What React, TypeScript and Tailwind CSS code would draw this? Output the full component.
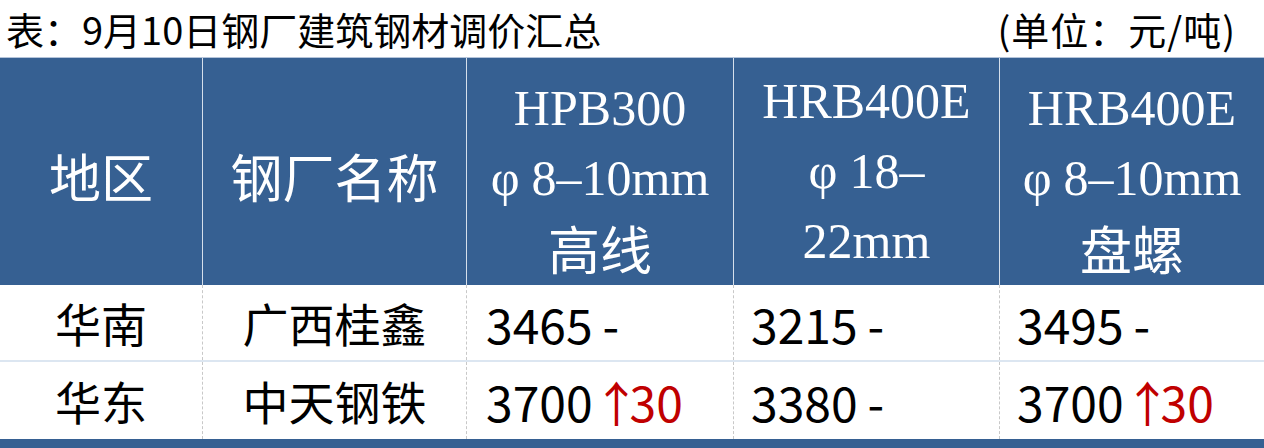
import React from "react";

const CJK = { fontFamily: '"Noto Sans CJK SC", "Noto Sans", sans-serif' };
const SERIF = { fontFamily: '"Liberation Serif", "Noto Sans CJK SC", serif' };

function HeadCJK({ children }: { children: React.ReactNode }) {
  return (
    <span className="text-[52px]" style={CJK}>
      {children}
    </span>
  );
}

function Line({ children }: { children: React.ReactNode }) {
  return <div className="h-[70px] leading-[70px] whitespace-nowrap">{children}</div>;
}

function Phi() {
  return <span className="mr-[12px]">φ</span>;
}

function Price({ base, change }: { base: string; change?: string }) {
  return (
    <span className="whitespace-nowrap">
      {base}
      {change ? (
        <span className="text-[#c00000]">
          <span className="tracking-[-11px]">↑</span>
          {change}
        </span>
      ) : (
        <span className="ml-[10px]">-</span>
      )}
    </span>
  );
}

export default function App() {
  return (
    <div className="w-[1264px] h-[448px] bg-white overflow-hidden text-black" style={CJK}>
      {/* Title */}
      <div className="h-[57px] flex items-center justify-between pl-[6px] pr-[28px] text-[38px] leading-[57px]">
        <span>表：9月10日钢厂建筑钢材调价汇总</span>
        <span className="tracking-[1px]">(单位：元/吨)</span>
      </div>

      {/* Header */}
      <div
        className="grid grid-cols-[202px_264px_267px_266px_265px] h-[228px] bg-[#366092] border-t border-[#b4c4da] text-white text-[50px]"
        style={SERIF}
      >
        <div className="flex items-center justify-center pt-[8px] overflow-hidden">
          <HeadCJK>地区</HeadCJK>
        </div>
        <div className="flex items-center justify-center pt-[8px] border-l border-[#d6dfeb] overflow-hidden">
          <HeadCJK>钢厂名称</HeadCJK>
        </div>
        <div className="flex flex-col items-center pt-[15px] border-l border-[#d6dfeb] overflow-hidden">
          <Line>HPB300</Line>
          <Line>
            <Phi />8–10mm
          </Line>
          <Line>
            <HeadCJK>高线</HeadCJK>
          </Line>
        </div>
        <div className="flex flex-col items-center pt-[8px] border-l border-[#d6dfeb] overflow-hidden">
          <Line>HRB400E</Line>
          <Line>
            <Phi />18–
          </Line>
          <Line>22mm</Line>
        </div>
        <div className="flex flex-col items-center pt-[15px] border-l border-[#d6dfeb] overflow-hidden">
          <Line>HRB400E</Line>
          <Line>
            <Phi />8–10mm
          </Line>
          <Line>
            <HeadCJK>盘螺</HeadCJK>
          </Line>
        </div>
      </div>

      {/* Row 1 */}
      <div className="grid grid-cols-[202px_264px_267px_266px_265px] h-[77px] border-b-2 border-[#dce6f1]">
        <div className="flex items-center justify-center text-[46px]">华南</div>
        <div className="flex items-center justify-center text-[46px] border-l border-dashed border-[#c8c8c8]">
          广西桂鑫
        </div>
        <div className="flex items-center pl-[19px] text-[48px] border-l border-dashed border-[#c8c8c8]">
          <Price base="3465" />
        </div>
        <div className="flex items-center pl-[17px] text-[48px] border-l border-dashed border-[#c8c8c8]">
          <Price base="3215" />
        </div>
        <div className="flex items-center pl-[17px] text-[48px] border-l border-dashed border-[#c8c8c8]">
          <Price base="3495" />
        </div>
      </div>

      {/* Row 2 */}
      <div className="grid grid-cols-[202px_264px_267px_266px_265px] h-[77px]">
        <div className="flex items-center justify-center text-[46px]">华东</div>
        <div className="flex items-center justify-center text-[46px] border-l border-dashed border-[#c8c8c8]">
          中天钢铁
        </div>
        <div className="flex items-center pl-[19px] text-[48px] border-l border-dashed border-[#c8c8c8]">
          <Price base="3700" change="30" />
        </div>
        <div className="flex items-center pl-[17px] text-[48px] border-l border-dashed border-[#c8c8c8]">
          <Price base="3380" />
        </div>
        <div className="flex items-center pl-[17px] text-[48px] border-l border-dashed border-[#c8c8c8]">
          <Price base="3700" change="30" />
        </div>
      </div>

      {/* Bottom border */}
      <div className="h-[9px] bg-[#366092]" />
    </div>
  );
}
